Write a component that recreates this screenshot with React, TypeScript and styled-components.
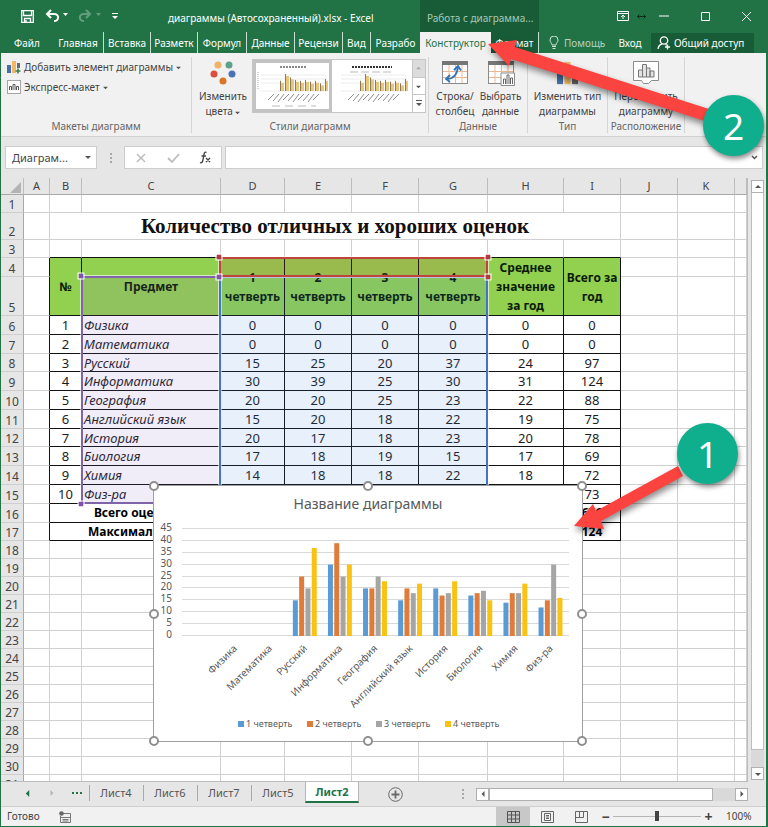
import React from 'react';
import styled, { createGlobalStyle, css } from 'styled-components';

const UI = '"Noto Sans", "Open Sans", sans-serif';
const GREEN = '#217346';
const DARK = '#185c37';
const LINE = '#d0d0d0';

const GlobalStyle = createGlobalStyle`
  * { box-sizing: border-box; }
  body { margin: 0; font-family: ${UI}; font-size: 10px; color: #444; }
  button, input, select { font: inherit; color: inherit; margin: 0; padding: 0; border: 0; background: none; border-radius: 0; }
`;

/* ---------- Shell ---------- */

const Window = styled.div`
  position: relative;
  display: flex;
  flex-direction: column;
  height: 100vh;
  min-height: 600px;
  overflow: hidden;
  background: #e6e6e6;
  border: solid ${GREEN};
  border-width: 0 2px 1px 1px;
`;

const Header = styled.header`
  display: grid;
  grid-template-columns: 419px 119px 1fr;
  grid-template-rows: 32px 21px;
  background: ${GREEN};
  color: #fff;
`;

const TitleLeft = styled.div`
  display: flex;
  align-items: center;
  padding-left: 19px;
`;

const QuickButtons = styled.div`
  display: flex;
  align-items: center;
  width: 148px;
`;

const IconButton = styled.button<{ $w: number; $dim?: boolean }>`
  display: flex;
  align-items: center;
  justify-content: center;
  width: ${(p) => p.$w}px;
  height: 20px;
  opacity: ${(p) => (p.$dim ? 0.3 : 1)};
  svg { flex: none; }
`;

const FileTitle = styled.div`
  font-size: 10px;
  padding-top: 4px;
  white-space: nowrap;
`;

const ContextTitle = styled.div`
  background: ${DARK};
  color: #a9c9b7;
  padding: 11px 0 0 7px;
  line-height: 14px;
  white-space: nowrap;
`;

const WindowButtons = styled.div`
  display: flex;
  align-items: center;
  justify-content: flex-end;
  padding-right: 7px;
`;

const TabsLeft = styled.nav`
  display: flex;
  align-items: stretch;
`;

const Tab = styled.button<{ $w: number; $line?: boolean }>`
  width: ${(p) => p.$w}px;
  height: 21px;
  text-align: center;
  white-space: nowrap;
  overflow: hidden;
  border-right: ${(p) => (p.$line ? '1px solid #c9ded1' : '0')};
`;

const TabsContext = styled.nav`
  display: flex;
  background: ${DARK};
`;

const ContextTab = styled.button<{ $active?: boolean }>`
  width: ${(p) => (p.$active ? 71 : 48)}px;
  color: ${(p) => (p.$active ? GREEN : '#fff')};
  background: ${(p) => (p.$active ? '#f1f1f1' : 'transparent')};
  border-right: ${(p) => (p.$active ? '0' : '1px solid #c9ded1')};
`;

const TabsRight = styled.div`
  display: flex;
  align-items: center;
  padding-left: 10px;
`;

const Help = styled.button`
  display: flex;
  align-items: center;
  gap: 5px;
  width: 60px;
  color: #b5d2c1;
  white-space: nowrap;
`;

const Login = styled.button`
  width: 42px;
  text-align: center;
`;

const Share = styled.button`
  display: flex;
  align-items: center;
  gap: 3px;
  height: 20px;
  width: 103px;
  padding-left: 6px;
  background: ${DARK};
  margin-left: auto;
  margin-right: 13px;
  font-size: 10px;
  white-space: nowrap;
`;

/* ---------- Ribbon ---------- */

const Ribbon = styled.section`
  display: flex;
  height: 84px;
  padding: 4px 0 3px;
  background: #f1f1f1;
  border-bottom: 1px solid #d2d2d2;
`;

const Group = styled.div<{ $w: number }>`
  display: flex;
  flex-direction: column;
  width: ${(p) => p.$w}px;
  border-right: 1px solid #d5d5d5;
`;

const GroupBody = styled.div<{ $stack?: boolean }>`
  display: flex;
  flex: 1;
  min-height: 0;
  align-items: flex-start;
  flex-direction: ${(p) => (p.$stack ? 'column' : 'row')};
  justify-content: ${(p) => (p.$stack ? 'flex-start' : 'center')};
`;

const GroupLabel = styled.div`
  flex: none;
  height: 13px;
  line-height: 13px;
  text-align: center;
  color: #666;
  white-space: nowrap;
`;

const SmallCommand = styled.button`
  display: flex;
  align-items: center;
  gap: 3px;
  height: 20px;
  padding-left: 6px;
  white-space: nowrap;
`;

const BigCommand = styled.button<{ $w: number }>`
  display: flex;
  flex-direction: column;
  align-items: center;
  width: ${(p) => p.$w}px;
  height: 62px;
  line-height: 15px;
  white-space: nowrap;
`;

const BigIcon = styled.span`
  display: flex;
  align-items: center;
  justify-content: center;
  height: 32px;
`;

const Gallery = styled.div`
  display: flex;
  height: 54px;
  margin-top: 2px;
  border: 1px solid #c6c6c6;
  background: #fff;
`;

const StyleThumb = styled.button<{ $active?: boolean }>`
  width: ${(p) => (p.$active ? 79 : 80)}px;
  border: 3px solid ${(p) => (p.$active ? '#c3c3c3' : 'transparent')};
`;

const GallerySteps = styled.div`
  display: flex;
  flex-direction: column;
  width: 13px;
  border-left: 1px solid #c6c6c6;
`;

const StepButton = styled.button<{ $off?: boolean }>`
  display: flex;
  flex: 1;
  align-items: center;
  justify-content: center;
  background: ${(p) => (p.$off ? '#dcdcdc' : '#fff')};
  & + & { border-top: 1px solid #c6c6c6; }
`;

/* ---------- Formula bar ---------- */

const FormulaBar = styled.div`
  display: flex;
  align-items: center;
  height: 41px;
  padding: 0 3px 0 4px;
`;

const NameBox = styled.div`
  position: relative;
  width: 92px;
  height: 23px;
  background: #fff;
  border: 1px solid #cdcdcd;
`;

const NameSelect = styled.select`
  width: 100%;
  height: 100%;
  padding-left: 6px;
  appearance: none;
  font-size: 11px;
`;

const SelectMark = styled.span`
  position: absolute;
  right: 5px;
  top: 2px;
  pointer-events: none;
`;

const Dots = styled.span`
  display: flex;
  flex-direction: column;
  align-items: center;
  gap: 2px;
  width: 27px;
  i { width: 2px; height: 2px; background: #a8a8a8; }
`;

const FormulaButtons = styled.div`
  display: flex;
  align-items: center;
  justify-content: space-around;
  width: 98px;
  height: 23px;
  background: #fff;
  border: 1px solid #cdcdcd;
`;

const FormulaField = styled.div`
  display: flex;
  flex: 1;
  margin-left: 3px;
  height: 23px;
  padding-right: 4px;
  background: #fff;
  border: 1px solid #cdcdcd;
  input { flex: 1; min-width: 0; }
`;

/* ---------- Sheet ---------- */

const Workspace = styled.main`
  display: flex;
  flex: 1;
  min-height: 0;
`;

const SheetView = styled.div`
  position: relative;
  flex: 1;
  min-width: 0;
  overflow: hidden;
  background: #fff;
  border-right: 1px solid #bdbdbd;
  border-bottom: 1px solid #bdbdbd;
`;

const Grid = styled.table`
  width: 100%;
  table-layout: fixed;
  border-collapse: separate;
  border-spacing: 0;
`;

const ColHead = styled.th`
  height: 17px;
  padding: 0;
  font-weight: 400;
  font-size: 11px;
  line-height: 16px;
  color: #444;
  background: #e6e6e6;
  border-right: 1px solid #bcbcbc;
  border-bottom: 1px solid #a8a8a8;
  white-space: nowrap;
  overflow: hidden;
`;

const RowHead = styled.th`
  padding: 0;
  vertical-align: bottom;
  font-weight: 400;
  font-size: 12px;
  line-height: 15px;
  color: #444;
  background: #e6e6e6;
  border-right: 1px solid #a8a8a8;
  border-bottom: 1px solid #cfcfcf;
`;

const Corner = styled.span`
  display: block;
  width: 11px;
  height: 11px;
  margin: 3px 0 0 9px;
  background: #b4b4b4;
  clip-path: polygon(100% 0, 100% 100%, 0 100%);
`;

const Row = styled.tr<{ $h: number }>`
  height: ${(p) => p.$h}px;
`;

type Kind = 'plain' | 'title' | 'head' | 'body' | 'sum';

const Cell = styled.td<{ $kind?: Kind; $bottom?: boolean; $right?: boolean; $left?: boolean }>`
  padding: 0;
  text-align: center;
  white-space: nowrap;
  overflow: hidden;
  font-size: 13px;
  line-height: 16px;
  color: #1d1d1d;
  border-right: 1px solid ${LINE};
  border-bottom: 1px solid ${LINE};
  ${(p) => p.$right && css`border-right-color: #111;`}
  ${(p) => p.$bottom && css`border-bottom-color: #111;`}
  ${(p) =>
    (p.$kind === 'head' || p.$kind === 'body' || p.$kind === 'sum') &&
    css`border-color: #111;`}
  ${(p) =>
    p.$kind === 'head' &&
    css`background: #92d050; font-size: 12px; font-weight: 700; line-height: 19px; color: #0b1a05;`}
  ${(p) => p.$kind === 'sum' && css`font-weight: 700; font-size: 12px; color: #000;`}
  ${(p) =>
    p.$kind === 'title' &&
    css`
      font: 700 21px/24px "Liberation Serif", "Times New Roman", serif;
      vertical-align: middle;
      color: #111;
    `}
  ${(p) =>
    p.$left &&
    css`text-align: left; padding-left: 2px; font-style: italic; font-size: 13px;`}
`;

const Range = styled.div<{ $x: number; $y: number; $w: number; $h: number; $line: string; $fill: string }>`
  position: absolute;
  left: ${(p) => p.$x}px;
  top: ${(p) => p.$y}px;
  width: ${(p) => p.$w}px;
  height: ${(p) => p.$h}px;
  box-shadow: inset 0 0 0 2px ${(p) => p.$line}, 0 0 0 1px rgba(255, 255, 255, 0.6);
  background: ${(p) => p.$fill};
  pointer-events: none;
`;

const Grip = styled.i<{ $x: number; $y: number; $color?: string }>`
  position: absolute;
  left: ${(p) => p.$x}%;
  top: ${(p) => p.$y}%;
  width: ${(p) => (p.$color ? 5 : 10)}px;
  height: ${(p) => (p.$color ? 5 : 10)}px;
  transform: translate(-50%, -50%);
  ${(p) =>
    p.$color
      ? css`background: ${p.$color}; outline: 1px solid #fff;`
      : css`background: #fff; border: 2px solid #8f8f8f; border-radius: 50%;`}
`;

const ChartFrame = styled.figure`
  position: absolute;
  left: 152px;
  top: 307px;
  width: 430px;
  height: 257px;
  margin: 0;
  background: #fff;
  border: 1px solid #a0a0a0;
`;

const ChartDrawing = styled.svg`
  display: block;
  font-family: ${UI};
  fill: #595959;
`;

/* ---------- Scroll bars, sheet tabs, status ---------- */

const VScroll = styled.div`
  display: flex;
  flex-direction: column;
  justify-content: space-between;
  width: 18px;
  padding: 2px 2px 2px 3px;
`;

const VTrack = styled.div`
  flex: 1;
  background: #d9d9d9;
`;

const VThumb = styled.div`
  height: 97%;
  background: #fff;
  border: solid #bdbdbd;
  border-width: 0 1px 1px;
`;

const ArrowButton = styled.button`
  display: flex;
  align-items: center;
  justify-content: center;
  width: 13px;
  height: 13px;
  background: #fff;
  border: 1px solid #b0b0b0;
`;

const SheetBar = styled.div`
  display: flex;
  height: 25px;
  border-bottom: 1px solid #cfcfcf;
`;

const SheetNav = styled.div`
  display: flex;
  align-items: center;
  width: 88px;
  height: 22px;
  padding-left: 16px;
`;

const SheetTab = styled.button<{ $active?: boolean }>`
  width: 54px;
  height: 21px;
  font-size: 11px;
  color: ${(p) => (p.$active ? GREEN : '#555')};
  ${(p) =>
    p.$active &&
    css`background: #fff; font-weight: 700; border-bottom: 2px solid ${GREEN}; border-left: 1px solid #b5b5b5; border-right: 1px solid #b5b5b5;`}
  ${(p) =>
    !p.$active &&
    css`background: linear-gradient(#a9a9a9, #a9a9a9) 0 3px / 1px 16px no-repeat;`}
`;

const AddSheet = styled.button`
  display: flex;
  align-items: center;
  justify-content: center;
  width: 72px;
  height: 24px;
`;

const HScroll = styled.div`
  display: flex;
  flex: 1;
  align-items: center;
  justify-content: flex-end;
  height: 24px;
  padding-right: 18px;
`;

const HTrack = styled.div`
  display: flex;
  width: 246px;
  height: 13px;
  background: #d9d9d9;
`;

const HThumb = styled.div`
  width: 91%;
  background: #fff;
  border: 1px solid #b0b0b0;
`;

const StatusBar = styled.footer`
  display: flex;
  align-items: stretch;
  height: 19px;
  background: #f1f1f1;
`;

const Ready = styled.span`
  width: 57px;
  padding-left: 6px;
  line-height: 18px;
`;

const ViewButtons = styled.div`
  display: flex;
  margin-left: auto;
`;

const ViewButton = styled.button<{ $active?: boolean }>`
  display: flex;
  align-items: center;
  justify-content: center;
  width: 34px;
  background: ${(p) => (p.$active ? '#c8c8c8' : 'transparent')};
`;

const ZoomSign = styled.button`
  width: 15px;
  font-size: 14px;
  line-height: 16px;
  font-weight: 700;
`;

const Slider = styled.input`
  width: 88px;
  height: 18px;
  appearance: none;
  background: linear-gradient(#b5b5b5, #b5b5b5) 0 50% / 100% 1px no-repeat;
  &::-webkit-slider-thumb {
    appearance: none;
    width: 4px;
    height: 10px;
    background: #444;
  }
`;

const ZoomValue = styled.span`
  width: 50px;
  padding-left: 10px;
  line-height: 18px;
`;

/* ---------- Callouts ---------- */

const CalloutArrow = styled.svg<{ $x: number; $y: number }>`
  position: absolute;
  left: ${(p) => p.$x}px;
  top: ${(p) => p.$y}px;
  pointer-events: none;
  overflow: visible;
  filter: drop-shadow(1px 4px 3px rgba(0, 0, 0, 0.45));
`;

const CalloutBadge = styled.div<{ $x: number; $y: number }>`
  position: absolute;
  left: ${(p) => p.$x}px;
  top: ${(p) => p.$y}px;
  width: 61px;
  height: 61px;
  border-radius: 50%;
  background: #0fae8c;
  color: #fff;
  font: 37px/61px "Noto Sans", sans-serif;
  text-align: center;
  box-shadow: 1px 3px 5px rgba(0, 0, 0, 0.45);
  pointer-events: none;
`;

/* ---------- Small drawings ---------- */

const Caret = ({ dir = 'down', color = '#555', size = 6 }: { dir?: string; color?: string; size?: number }) => {
  const d: Record<string, string> = {
    down: 'M0 2h6L3 5z',
    up: 'M0 4h6L3 1z',
    left: 'M4.5 0v6L1.5 3z',
    right: 'M1.5 0v6l3-3z',
  };
  return (
    <svg width={size} height={size} viewBox="0 0 6 6" aria-hidden="true">
      <path d={d[dir]} fill={color} />
    </svg>
  );
};

const BarsIcon = ({ w, h, plus }: { w: number; h: number; plus?: boolean }) => (
  <svg width={w} height={h} viewBox="0 0 14 14" preserveAspectRatio="none" aria-hidden="true">
    <path d="M0 5h4v8H0z" fill="#4472a8" />
    <path d="M5 1h4v12H5z" fill="#f2b867" />
    <path d={plus ? 'M10 3h3v5h-3z' : 'M10 4h4v9h-4z'} fill="#6b6b6b" />
    {plus && <path d="M8.500 11h5M11 8.500v5" stroke="#3e7d4f" strokeWidth="1.600" fill="none" />}
  </svg>
);

const LayoutIcon = () => (
  <svg width="14" height="14" viewBox="0 0 14 14" aria-hidden="true">
    <rect x=".5" y=".5" width="13" height="13" fill="#fff" stroke="#a5a5a5" />
    <path d="M2.500 10V6.500h2V10M6 10V4.500h2V10M9.500 10V6.500h2V10" fill="none" stroke="#555" />
  </svg>
);

const ColorsIcon = () => (
  <svg width="26" height="26" viewBox="0 0 26 26" aria-hidden="true">
    <circle cx="8" cy="5" r="3.500" fill="#f0b266" />
    <circle cx="19" cy="5" r="3.500" fill="#5da287" />
    <circle cx="4" cy="14" r="3.500" fill="#dd4b41" />
    <circle cx="22" cy="14" r="3.500" fill="#4a72b8" />
    <circle cx="13" cy="21" r="3.500" fill="#d9742b" />
  </svg>
);

const TableIcon = ({ chart }: { chart?: boolean }) => (
  <svg width="28" height="26" viewBox="0 0 28 26" aria-hidden="true">
    <rect x="1.500" y="1.500" width="25" height="22" fill="#fff" stroke="#8b8b8b" />
    <path d="M1 1h26v4H1z" fill="#767676" />
    <path d="M8 5v18M14.500 5v18M21 5v18M2 11.500h24M2 17.500h24" stroke="#eab896" fill="none" />
    {chart ? (
      <>
        <path d="M14 13h13.500v12.500H14z" fill="#fff" stroke="#8b8b8b" />
        <path d="M16.500 24v-5h2v5M20 24v-9h2v9M23.500 24v-6h2v6" fill="none" stroke="#666" />
      </>
    ) : (
      <g fill="none" stroke="#2f75b5" strokeWidth="1.800">
        <path d="M6 19c6 0 10-4 11-12" />
        <path d="M9 15L5 19l4 3M13 10l4-4 3 4.500" />
      </g>
    )}
  </svg>
);

const MoveIcon = () => (
  <svg width="26" height="26" viewBox="0 0 26 26" aria-hidden="true">
    <path d="M.5 1.500h25v19h-7l-3 3h-5l-2-3H.5z" fill="#fff" stroke="#8b8b8b" />
    <path d="M5.500 17v-7h4v7zM9.500 17V4.500h4V17zM13.500 17V8h3.500v9zM17 17v-6h4v6z" fill="#e2e2e2" stroke="#777" />
  </svg>
);

const THUMB_BARS = [12, 20, 16, 13, 12, 13, 11, 12, 9, 14];

const ThumbDrawing = ({ variant }: { variant: 1 | 2 }) => (
  <svg width="72" height="46" viewBox="0 0 72 46" aria-hidden="true">
    <rect width="72" height="46" fill="#fff" />
    <path d={variant === 1 ? 'M24 4h26' : 'M16 4h40'} stroke={variant === 1 ? '#888' : '#333'} strokeWidth="2" strokeDasharray="2 1" />
    {variant === 1 ? (
      <path d="M2 9v18" stroke="#aaa" strokeDasharray="1 1" />
    ) : (
      <path d="M14 9h44" stroke="#bbb" strokeDasharray="8 3" />
    )}
    <path d="M5 12h66M5 16h66M5 20h66M5 28h66" stroke="#ececec" />
    {THUMB_BARS.map((h, i) => (
      <g key={i}>
        <rect x={24 + i * 5} y={28 - h * 0.85} width="1" height={h * 0.85} fill="#8a7a5c" />
        <rect x={25 + i * 5} y={30 - h * 0.85} width="3" height={h * 0.85 - 2} fill="#e8c67a" />
        <path d={`M${17 + i * 5 - 5} ${37 + (i % 3)}L${17 + i * 5 + 1} 31`} stroke="#8f8f8f" />
      </g>
    ))}
    {variant === 1 && <path d="M16 43h44" stroke="#bbb" strokeDasharray="8 5" />}
  </svg>
);

/* ---------- Data ---------- */

const COLUMNS: [string, number][] = [
  ['A', 26], ['B', 32], ['C', 139], ['D', 64], ['E', 67], ['F', 67],
  ['G', 69], ['H', 76], ['I', 57], ['J', 57], ['K', 57],
];

const SUBJECTS: [string, number[], number, number][] = [
  ['Физика', [0, 0, 0, 0], 0, 0],
  ['Математика', [0, 0, 0, 0], 0, 0],
  ['Русский', [15, 25, 20, 37], 24, 97],
  ['Информатика', [30, 39, 25, 30], 31, 124],
  ['География', [20, 20, 25, 23], 22, 88],
  ['Английский язык', [15, 20, 18, 22], 19, 75],
  ['История', [20, 17, 18, 23], 20, 78],
  ['Биология', [17, 18, 19, 15], 17, 69],
  ['Химия', [14, 18, 18, 22], 18, 72],
  ['Физ-ра', [12, 15, 30, 16], 18, 73],
];

const SERIES = ['#5b9bd5', '#e07b39', '#a5a5a5', '#fac213'];
const BODY_HEIGHTS = [19, 19, 18, 19, 19, 19, 18, 19, 19, 19];

const Chart = () => {
  const step = 35.1;
  const base = 149;
  const unit = 2.38;
  return (
    <ChartDrawing width="427" height="255" viewBox="0 0 427 255" role="img" aria-label="Название диаграммы">
      <text x="214" y="23" fontSize="14" textAnchor="middle">Название диаграммы</text>
      {[0, 5, 10, 15, 20, 25, 30, 35, 40, 45].map((v) => (
        <g key={v}>
          <path d={`M28 ${Math.round(base - v * unit) + 0.5}h387`} stroke="#d9d9d9" />
          <text x="18" y={Math.round(base - v * unit) + 3} fontSize="10" textAnchor="end">{v}</text>
        </g>
      ))}
      {SUBJECTS.map(([name, marks], i) => {
        const cx = 28 + step * (i + 1.5);
        return (
          <g key={name}>
            {marks.map((m, k) => (
              <rect key={k} x={cx - 12 + k * 6.3} y={base + 1 - m * unit} width="5" height={m * unit} fill={SERIES[k]} />
            ))}
            <text fontSize="10" textAnchor="end" transform={`translate(${cx + 3} 163) rotate(-45)`}>{name}</text>
          </g>
        );
      })}
      {SERIES.map((c, k) => (
        <g key={c}>
          <rect x={84 + k * 69} y="235" width="6" height="6" fill={c} />
          <text x={92 + k * 69} y="241" fontSize="9">{k + 1} четверть</text>
        </g>
      ))}
    </ChartDrawing>
  );
};

const Blank = ({ n }: { n: number }) => (
  <>{Array.from({ length: n }, (_, i) => <Cell key={i} />)}</>
);

const Sheet = () => (
  <SheetView>
    <Grid>
      <colgroup>
        <col width="23" />
        {COLUMNS.map(([c, w]) => <col key={c} width={w} />)}
        <col />
      </colgroup>
      <thead>
        <tr>
          <ColHead><Corner /></ColHead>
          {COLUMNS.map(([c]) => <ColHead key={c} scope="col">{c}</ColHead>)}
          <ColHead />
        </tr>
      </thead>
      <tbody>
        <Row $h={18}><RowHead>1</RowHead><Blank n={12} /></Row>
        <Row $h={27}>
          <RowHead>2</RowHead>
          <Cell />
          <Cell $kind="title" colSpan={8}>Количество отличных и хороших оценок</Cell>
          <Blank n={3} />
        </Row>
        <Row $h={18}>
          <RowHead>3</RowHead>
          <Cell />
          {Array.from({ length: 8 }, (_, i) => <Cell key={i} $bottom />)}
          <Blank n={3} />
        </Row>
        <Row $h={19}>
          <RowHead>4</RowHead>
          <Cell $right />
          <Cell $kind="head" rowSpan={2}>№</Cell>
          <Cell $kind="head" rowSpan={2}>Предмет</Cell>
          {[1, 2, 3, 4].map((q) => (
            <Cell key={q} $kind="head" rowSpan={2}>{q}<br />четверть</Cell>
          ))}
          <Cell $kind="head" rowSpan={2}>Среднее<br />значение<br />за год</Cell>
          <Cell $kind="head" rowSpan={2}>Всего за<br />год</Cell>
          <Blank n={3} />
        </Row>
        <Row $h={39}><RowHead>5</RowHead><Cell $right /><Blank n={3} /></Row>
        {SUBJECTS.map(([name, marks, avg, total], i) => (
          <Row key={name} $h={BODY_HEIGHTS[i]}>
            <RowHead>{i + 6}</RowHead>
            <Cell $right />
            <Cell $kind="body">{i + 1}</Cell>
            <Cell $kind="body" $left>{name}</Cell>
            {marks.map((m, k) => <Cell key={k} $kind="body">{m}</Cell>)}
            <Cell $kind="body">{avg}</Cell>
            <Cell $kind="body">{total}</Cell>
            <Blank n={3} />
          </Row>
        ))}
        {([['Всего оценок', 676], ['Максимальная', 124]] as [string, number][]).map(([label, v], i) => (
          <Row key={label} $h={19 - i}>
            <RowHead>{16 + i}</RowHead>
            <Cell $right />
            <Cell $kind="sum" colSpan={2}>{label}</Cell>
            {[0, 1, 2, 3, 4].map((k) => <Cell key={k} $kind="sum" />)}
            <Cell $kind="sum">{v}</Cell>
            <Blank n={3} />
          </Row>
        ))}
        {Array.from({ length: 14 }, (_, i) => (
          <Row key={i} $h={18}><RowHead>{18 + i}</RowHead><Blank n={12} /></Row>
        ))}
      </tbody>
    </Grid>
    <Range $x={80} $y={98} $w={140} $h={228} $line="#8064a9" $fill="rgba(128,100,200,.12)">
      <Grip $x={0} $y={0} $color="#8052ad" />
      <Grip $x={0} $y={100} $color="#8052ad" />
    </Range>
    <Range $x={218} $y={98} $w={269} $h={228} $line="#4472c4" $fill="rgba(68,130,220,.12)" />
    <Range $x={218} $y={79} $w={269} $h={20} $line="#c0443c" $fill="rgba(192,80,60,.16)">
      <Grip $x={0} $y={0} $color="#b03a3e" />
      <Grip $x={100} $y={0} $color="#b03a3e" />
      <Grip $x={0} $y={100} $color="#8052ad" />
      <Grip $x={100} $y={100} $color="#b03a3e" />
    </Range>
    <ChartFrame>
      <Chart />
      {[[0, 0], [50, 0], [100, 0], [0, 50], [100, 50], [0, 100], [50, 100], [100, 100]].map(([x, y]) => (
        <Grip key={`${x}-${y}`} $x={x} $y={y} />
      ))}
    </ChartFrame>
  </SheetView>
);

const TABS: [string, number, boolean][] = [
  ['Файл', 52, false], ['Главная', 51, true], ['Вставка', 47, true], ['Разметк', 47, true], ['Формул', 49, true],
  ['Данные', 48, true], ['Рецензи', 48, true], ['Вид', 28, true], ['Разрабо', 49, false],
];

export default function App() {
  return (
    <>
      <GlobalStyle />
      <Window>
        <Header>
          <TitleLeft>
            <QuickButtons>
              <IconButton $w={14} aria-label="Сохранить">
                <svg width="13" height="13" viewBox="0 0 13 13" fill="none" stroke="#fff" strokeWidth="1.300">
                  <path d="M.7.7h11.600v11.600H.7z" />
                  <path d="M2.500 1v4.500h8V1M3.500 12V8.500h6V12M5 10v2" />
                </svg>
              </IconButton>
              <IconButton $w={46} aria-label="Отменить">
                <svg width="24" height="14" viewBox="0 0 24 14" fill="none" stroke="#fff" strokeWidth="2">
                  <path d="M2 5h7c6 0 5 7 0 7M6 1L2 5l4 4" />
                  <path d="M18 4h5l-2.500 3z" fill="#fff" stroke="none" />
                </svg>
              </IconButton>
              <IconButton $w={20} $dim aria-label="Повторить">
                <svg width="24" height="14" viewBox="0 0 24 14" fill="none" stroke="#fff" strokeWidth="2">
                  <path d="M12 5H6c-6 0-5 7 0 7M8 1l4 4-4 4" />
                  <path d="M18 4h5l-2.500 3z" fill="#fff" stroke="none" />
                </svg>
              </IconButton>
              <IconButton $w={30} aria-label="Настроить панель">
                <svg width="6" height="8" viewBox="0 0 6 8" fill="#fff"><path d="M0 1h6v1H0zM0 4h6L3 7z" /></svg>
              </IconButton>
            </QuickButtons>
            <FileTitle>диаграммы (Автосохраненный).xlsx - Excel</FileTitle>
          </TitleLeft>
          <ContextTitle>Работа с диаграмма...</ContextTitle>
          <WindowButtons>
            <IconButton $w={20} aria-label="Параметры ленты">
              <svg width="12" height="10" viewBox="0 0 12 10" fill="none" stroke="#fff">
                <path d="M.5.5h11v9H.5zM.5 2.500h11M6 8V4.500M4 6l2-2 2 2" />
              </svg>
            </IconButton>
            <IconButton $w={16} aria-label="Изменить размер">
              <svg width="9" height="5" viewBox="0 0 9 5" fill="none" stroke="#0c2c19"><path d="M0 2.500h9M2.500.5l-2 2 2 2M6.500.5l2 2-2 2" /></svg>
            </IconButton>
            <IconButton $w={30} aria-label="Свернуть">
              <svg width="10" height="2" viewBox="0 0 10 2"><path d="M0 1h10" stroke="#fff" /></svg>
            </IconButton>
            <IconButton $w={53} aria-label="Развернуть">
              <svg width="9" height="9" viewBox="0 0 9 9"><path d="M.5.5h8v8h-8z" stroke="#fff" fill="none" /></svg>
            </IconButton>
            <IconButton $w={28} aria-label="Закрыть">
              <svg width="9" height="9" viewBox="0 0 9 9"><path d="M0 0l9 9M9 0L0 9" stroke="#fff" /></svg>
            </IconButton>
          </WindowButtons>
          <TabsLeft>
            {TABS.map(([t, w, line]) => <Tab key={t} $w={w} $line={line}>{t}</Tab>)}
          </TabsLeft>
          <TabsContext>
            <ContextTab $active>Конструктор</ContextTab>
            <ContextTab>Формат</ContextTab>
          </TabsContext>
          <TabsRight>
            <Help>
              <svg width="10" height="13" viewBox="0 0 10 13" fill="none" stroke="#cfe2d7">
                <path d="M3 9C3 7 1 6.500 1 4a4 4 0 018 0c0 2.500-2 3-2 5zM3 10.500h4M3.500 12.500h3" />
              </svg>
              Помощь
            </Help>
            <Login>Вход</Login>
            <Share>
              <svg width="14" height="14" viewBox="0 0 14 14" fill="none" stroke="#fff" strokeWidth="1.300">
                <circle cx="7" cy="4.500" r="3.700" />
                <path d="M1 13c.5-3 2-4.500 4-5M8.500 8.500l2 1M10.500 8.500v5M8 11h5" />
              </svg>
              Общий доступ
            </Share>
          </TabsRight>
        </Header>

        <Ribbon>
          <Group $w={191}>
            <GroupBody $stack>
              <SmallCommand><BarsIcon w={14} h={14} plus />Добавить элемент диаграммы <Caret size={5} /></SmallCommand>
              <SmallCommand><LayoutIcon />Экспресс-макет <Caret size={5} /></SmallCommand>
            </GroupBody>
            <GroupLabel>Макеты диаграмм</GroupLabel>
          </Group>
          <Group $w={237}>
            <GroupBody>
              <BigCommand $w={57}>
                <BigIcon><ColorsIcon /></BigIcon>
                <span>Изменить</span>
                <span>цвета <Caret size={5} /></span>
              </BigCommand>
              <Gallery>
                <StyleThumb $active aria-label="Стиль 1"><ThumbDrawing variant={1} /></StyleThumb>
                <StyleThumb aria-label="Стиль 2"><ThumbDrawing variant={2} /></StyleThumb>
                <GallerySteps>
                  <StepButton $off aria-label="Вверх"><Caret dir="up" color="#aaa" size={5} /></StepButton>
                  <StepButton aria-label="Вниз"><Caret size={5} /></StepButton>
                  <StepButton aria-label="Ещё">
                    <svg width="6" height="7" viewBox="0 0 6 7" fill="#555"><path d="M0 0h6v1H0zM0 3h6L3 6z" /></svg>
                  </StepButton>
                </GallerySteps>
              </Gallery>
            </GroupBody>
            <GroupLabel>Стили диаграмм</GroupLabel>
          </Group>
          <Group $w={99}>
            <GroupBody>
              <BigCommand $w={45}><BigIcon><TableIcon /></BigIcon><span>Строка/</span><span>столбец</span></BigCommand>
              <BigCommand $w={46}><BigIcon><TableIcon chart /></BigIcon><span>Выбрать</span><span>данные</span></BigCommand>
            </GroupBody>
            <GroupLabel>Данные</GroupLabel>
          </Group>
          <Group $w={80}>
            <GroupBody>
              <BigCommand $w={74}><BigIcon><BarsIcon w={21} h={26} /></BigIcon><span>Изменить тип</span><span>диаграммы</span></BigCommand>
            </GroupBody>
            <GroupLabel>Тип</GroupLabel>
          </Group>
          <Group $w={77}>
            <GroupBody>
              <BigCommand $w={74}><BigIcon><MoveIcon /></BigIcon><span>Переместить</span><span>диаграмму</span></BigCommand>
            </GroupBody>
            <GroupLabel>Расположение</GroupLabel>
          </Group>
        </Ribbon>

        <FormulaBar>
          <NameBox>
            <NameSelect aria-label="Имя" defaultValue="c"><option value="c">Диаграм...</option></NameSelect>
            <SelectMark><Caret /></SelectMark>
          </NameBox>
          <Dots><i /><i /><i /></Dots>
          <FormulaButtons>
            <IconButton $w={20} aria-label="Отмена"><svg width="10" height="10" viewBox="0 0 10 10"><path d="M1 1l8 8M9 1L1 9" stroke="#bdbdbd" strokeWidth="1.500" /></svg></IconButton>
            <IconButton $w={20} aria-label="Ввод"><svg width="13" height="10" viewBox="0 0 13 10"><path d="M1 5l4 4 7-8" stroke="#bdbdbd" strokeWidth="1.800" fill="none" /></svg></IconButton>
            <IconButton $w={20} aria-label="Вставить функцию">
              <svg width="13" height="13" viewBox="0 0 13 13" fill="none" stroke="#444" strokeWidth="1.400">
                <path d="M7.500 1.500C5.500 0 5 3 4.500 6S3.500 13 1 11.500M2.500 5h4.500M7 7l4 4M11 7l-4 4" />
              </svg>
            </IconButton>
          </FormulaButtons>
          <FormulaField>
            <input aria-label="Строка формул" />
            <IconButton $w={8} aria-label="Развернуть строку"><svg width="7" height="5" viewBox="0 0 7 5"><path d="M1 1l2.500 2.500L6 1" stroke="#555" strokeWidth="1.500" fill="none" /></svg></IconButton>
          </FormulaField>
        </FormulaBar>

        <Workspace>
          <Sheet />
          <VScroll>
            <ArrowButton aria-label="Прокрутить вверх"><Caret dir="up" /></ArrowButton>
            <VTrack><VThumb /></VTrack>
            <ArrowButton aria-label="Прокрутить вниз"><Caret /></ArrowButton>
          </VScroll>
        </Workspace>

        <SheetBar>
          <SheetNav>
            <IconButton $w={20} aria-label="Назад"><Caret dir="left" color={GREEN} size={7} /></IconButton>
            <IconButton $w={30} aria-label="Вперёд"><Caret dir="right" color="#b5b5b5" /></IconButton>
            <IconButton $w={20} aria-label="Другие листы">
              <svg width="10" height="2" viewBox="0 0 10 2" fill={GREEN}><path d="M0 0h2v2H0zM4 0h2v2H4zM8 0h2v2H8z" /></svg>
            </IconButton>
          </SheetNav>
          {['Лист4', 'Лист6', 'Лист7', 'Лист5'].map((t) => <SheetTab key={t}>{t}</SheetTab>)}
          <SheetTab $active>Лист2</SheetTab>
          <AddSheet aria-label="Новый лист">
            <svg width="15" height="15" viewBox="0 0 15 15" fill="none" stroke="#6a6a6a">
              <circle cx="7.500" cy="7.500" r="6.800" />
              <path d="M7.500 3.500v8M3.500 7.500h8" strokeWidth="1.800" />
            </svg>
          </AddSheet>
          <HScroll>
            <Dots><i /><i /><i /></Dots>
            <ArrowButton aria-label="Прокрутить влево"><Caret dir="left" /></ArrowButton>
            <HTrack><HThumb /></HTrack>
            <ArrowButton aria-label="Прокрутить вправо"><Caret dir="right" /></ArrowButton>
          </HScroll>
        </SheetBar>

        <StatusBar>
          <Ready>Готово</Ready>
          <IconButton $w={13} aria-label="Запись макроса">
            <svg width="12" height="12" viewBox="0 0 12 12" fill="none" stroke="#777">
              <path d="M4 2.500h7.500v9h-10V5M2 6.500h9M3.500 8.500h6M3.500 10h6" />
              <circle cx="2.500" cy="2.500" r="2.300" fill="#666" stroke="none" />
            </svg>
          </IconButton>
          <ViewButtons>
            <ViewButton $active aria-label="Обычный">
              <svg width="13" height="12" viewBox="0 0 13 12" fill="none" stroke="#555"><path d="M.5.5h12v11H.5zM.5 4h12M.5 8h12M4.500.5v11M8.500.5v11" /></svg>
            </ViewButton>
            <ViewButton aria-label="Разметка страницы">
              <svg width="13" height="12" viewBox="0 0 13 12" fill="none" stroke="#666"><path d="M.5.5h12v11H.5zM3.500 2.500h6v7h-6zM5 4.500h3M5 6h3M5 7.500h3" /></svg>
            </ViewButton>
            <ViewButton aria-label="Страничный">
              <svg width="13" height="12" viewBox="0 0 13 12" fill="none" stroke="#666"><path d="M.5.5h12v11H.5zM4.500.5v6h4v-6M.5 6.500h8" /></svg>
            </ViewButton>
          </ViewButtons>
          <ZoomSign aria-label="Уменьшить">−</ZoomSign>
          <Slider type="range" min="0" max="100" defaultValue="50" aria-label="Масштаб" />
          <ZoomSign aria-label="Увеличить">+</ZoomSign>
          <ZoomValue>100%</ZoomValue>
        </StatusBar>

        <CalloutArrow $x={486} $y={20} width="240" height="110" viewBox="0 0 240 110">
          <path d="M1 24L30 20L28 27L222 89L218 101L24 39L22 46Z" fill="#fb4340" />
        </CalloutArrow>
        <CalloutBadge $x={702} $y={95}>2</CalloutBadge>
        <CalloutArrow $x={569} $y={460} width="130" height="80" viewBox="0 0 130 80">
          <path d="M4 66L23 44L26 51L108 6L113 16L31 61L34 69Z" fill="#fb4340" />
        </CalloutArrow>
        <CalloutBadge $x={676} $y={423}>1</CalloutBadge>
      </Window>
    </>
  );
}
